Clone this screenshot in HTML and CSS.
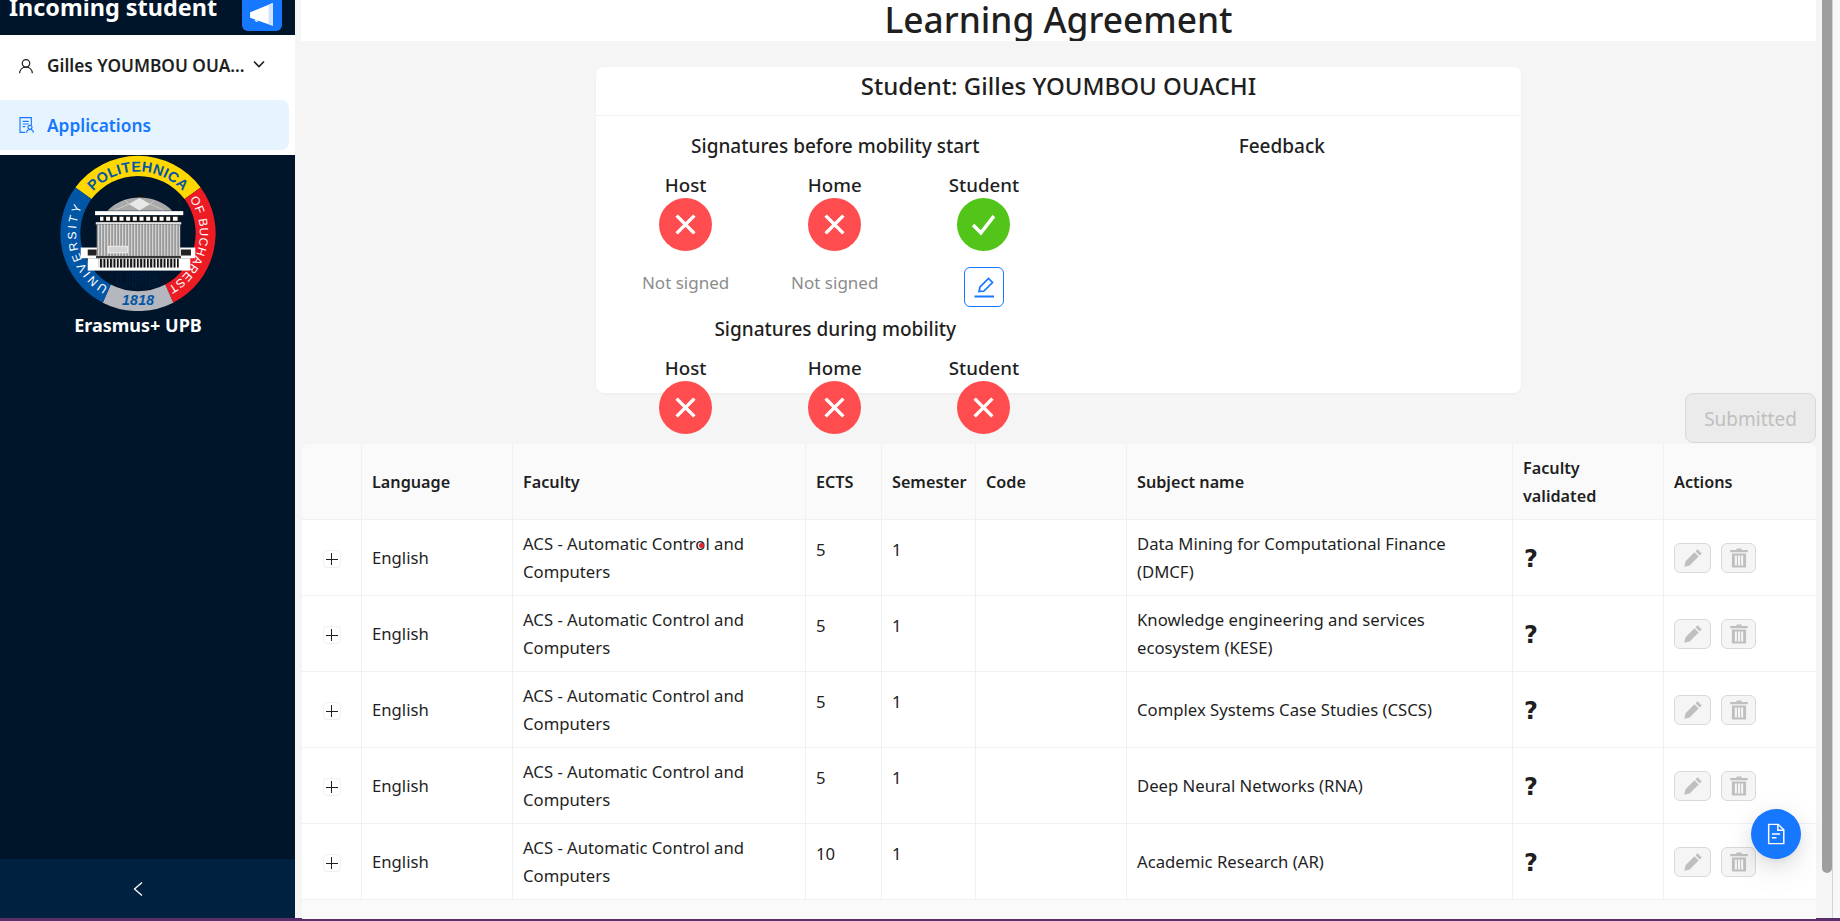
FILE: index.html
```html
<!DOCTYPE html>
<html lang="en">
  <head>
    <meta charset="UTF-8" />
    <meta name="viewport" content="width=device-width, initial-scale=1.0" />
    <title>Learning Agreement</title>
    <link rel="stylesheet" href="styles.css">
  </head>
  <body>
    <div class="layout">
      <aside class="sider">
        <div class="sider-head">
          <span class="sider-title">Incoming student</span>
          <button class="notify-btn">
            <svg viewBox="0 0 24 24" width="26" height="26"><path fill="#fff" d="M1 9.500 22 1v21L12 18.500v0L1 14.500z"/><path fill="#cfe3ff" d="M18 2.600 22 1v21l-4-1.600z"/><path fill="#cfe3ff" d="M5 16l4 1.400a2.200 2.200 0 0 1-4-1.400z"/></svg>
          </button>
        </div>
        <div class="sider-menu">
          <div class="menu-user">
            <svg class="menu-icon" viewBox="0 0 24 24" fill="none" stroke="#1f1f1f" stroke-width="1.800"><circle cx="12" cy="8" r="5.600"/><path d="M2.500 23c0-5.500 4-9.400 9.500-9.400s9.500 3.900 9.500 9.400"/></svg>
            <span class="user-name">Gilles YOUMBOU OUA...</span>
            <svg class="user-caret" viewBox="0 0 12 8" fill="none" stroke="#1f1f1f" stroke-width="1.600"><path d="M1 1.500 6 6.500l5-5"/></svg>
          </div>
          <div class="menu-active">
            <svg class="menu-icon" viewBox="0 0 24 24" fill="none" stroke="#1677ff" stroke-width="1.700"><path d="M11 23H3V1h17v11"/><path d="M7 6.500h9M7 10.500h9M7 14.500h4"/><circle cx="18" cy="15.500" r="3"/><path d="M13 23.500c0-3 2.200-4.800 5-4.800s5 1.800 5 4.800"/></svg>
            <span>Applications</span>
          </div>
        </div>
        <div class="sider-body">
          <svg class="logo" viewBox="30 15 467 467">
            <defs>
              <path id="arc-top" d="M105 157A182 182 0 0 1 422 157"/>
              <path id="arc-left" d="M200 422A185 185 0 0 1 113.500 139"/>
              <path id="arc-right" d="M405.500 129A185 185 0 0 1 332.500 419.500"/>
              <pattern id="cols" width="9" height="10" patternUnits="userSpaceOnUse">
                <rect width="9" height="10" fill="#9a9a9a"/>
                <rect width="3" height="10" fill="#d8d8d8"/>
              </pattern>
              <pattern id="base-cols" width="10" height="10" patternUnits="userSpaceOnUse">
                <rect width="10" height="10" fill="#fff"/>
                <rect width="6" height="10" fill="#111"/>
              </pattern>
            </defs>
            <path fill="#ffd800" d="M76 112A233 233 0 0 1 451 112L403 147A175 175 0 0 0 124 147z"/>
            <path fill="#ed1c24" d="M451 112A233 233 0 0 1 369 457L345 403A175 175 0 0 0 403 147z"/>
            <path fill="#b4b7bd" d="M369 457A233 233 0 0 1 158 457L182 403A175 175 0 0 0 345 403z"/>
            <path fill="#0256a6" d="M158 457A233 233 0 0 1 76 112L124 147A175 175 0 0 0 182 403z"/>
            <text class="logo-top"><textPath href="#arc-top" startOffset="50%" text-anchor="middle">POLITEHNICA</textPath></text>
            <text class="logo-ring logo-univ"><textPath href="#arc-left" startOffset="50%" text-anchor="middle">UNIVERSITY</textPath></text>
            <text class="logo-ring"><textPath href="#arc-right" startOffset="50%" text-anchor="middle">OF BUCHAREST</textPath></text>
            <text class="logo-year" x="264" y="465" text-anchor="middle">1818</text>
            <text class="logo-upb" x="264" y="410" text-anchor="middle">UPB</text>
            <circle cx="268" cy="140" r="9" fill="#111"/>
            <path fill="#a9a9a9" d="M172 182C195 155 235 142 268 142s75 13 98 40z"/>
            <path fill="#e8e8e8" d="M268 144l32 18-32 19-32-19z"/>
            <path fill="none" stroke="#eee" stroke-width="1.500" d="M195 180l41-18M340 180l-40-18M225 150l11 12M312 150l-12 12"/>
            <rect x="92" y="292" width="343" height="32" fill="#fff"/>
            <path fill="#222" d="M113 298h27v18h-27zM392 298h30v18h-30z"/>
            <rect x="113" y="324" width="307" height="37" fill="#fff"/>
            <rect x="135" y="183" width="264" height="12" fill="#fff"/>
            <rect x="148" y="197" width="240" height="19" fill="#111"/>
            <path fill="#fff" d="M150 200h10v12h-10zM168 200h12v12h-12zM188 200h12v12h-12zM208 200h12v12h-12zM228 200h12v12h-12zM248 200h12v12h-12zM268 200h12v12h-12zM288 200h12v12h-12zM308 200h12v12h-12zM328 200h12v12h-12zM348 200h12v12h-12zM368 200h14v12h-14z"/>
            <rect x="137" y="216" width="256" height="7" fill="#e4e4e4"/>
            <rect x="140" y="223" width="250" height="94" fill="url(#cols)"/>
            <rect x="175" y="288" width="57" height="20" fill="#d4d4d4" stroke="#fff" stroke-width="2"/>
            <rect x="138" y="317" width="254" height="7" fill="#333"/>
            <rect x="146" y="326" width="240" height="26" fill="url(#base-cols)"/>
          </svg>
          <div class="brand">Erasmus+ UPB</div>
        </div>
        <div class="sider-trigger">
          <svg viewBox="0 0 10 16" width="10" height="16" fill="none" stroke="#fff" stroke-width="1.300"><path d="M9 1.500 1.500 8 9 14.500"/></svg>
        </div>
      </aside>

      <main class="content">
        <h1 class="page-title"><span>Learning Agreement</span></h1>

        <section class="card">
          <div class="card-head">Student: Gilles YOUMBOU OUACHI</div>
          <div class="card-body">
            <div class="sign-col">
              <h4>Signatures before mobility start</h4>
              <div class="sign-grid">
                <div class="sign-label">Host</div>
                <div class="sign-label">Home</div>
                <div class="sign-label">Student</div>
                <div class="dot dot-no"><svg viewBox="0 0 24 24"><path d="M3.500 3.500l17 17M20.500 3.500l-17 17"/></svg></div>
                <div class="dot dot-no"><svg viewBox="0 0 24 24"><path d="M3.500 3.500l17 17M20.500 3.500l-17 17"/></svg></div>
                <div class="dot dot-yes"><svg viewBox="0 0 24 24"><path d="M2 12.500 9.500 20 22 4"/></svg></div>
                <div class="sign-note">Not signed</div>
                <div class="sign-note">Not signed</div>
                <div class="sign-note">
                  <button class="edit-btn">
                    <svg viewBox="0 0 24 24" fill="none" stroke="#1677ff" stroke-width="1.700"><path d="M7 16.500 8 12 16.500 3.500l4 4L12 16z"/><path d="M2.500 21.500h19.500" stroke-width="2"/></svg>
                  </button>
                </div>
              </div>
              <h4 class="during">Signatures during mobility</h4>
              <div class="sign-grid">
                <div class="sign-label">Host</div>
                <div class="sign-label">Home</div>
                <div class="sign-label">Student</div>
                <div class="dot dot-no"><svg viewBox="0 0 24 24"><path d="M3.500 3.500l17 17M20.500 3.500l-17 17"/></svg></div>
                <div class="dot dot-no"><svg viewBox="0 0 24 24"><path d="M3.500 3.500l17 17M20.500 3.500l-17 17"/></svg></div>
                <div class="dot dot-no"><svg viewBox="0 0 24 24"><path d="M3.500 3.500l17 17M20.500 3.500l-17 17"/></svg></div>
              </div>
            </div>
            <div class="sign-col">
              <h4>Feedback</h4>
            </div>
          </div>
        </section>

        <div class="submit-row">
          <button class="submit-btn">Submitted</button>
        </div>

        <table class="subjects">
          <colgroup>
            <col class="c-expand"><col class="c-lang"><col class="c-faculty"><col class="c-ects"><col class="c-sem"><col class="c-code"><col class="c-name"><col class="c-valid"><col class="c-actions">
          </colgroup>
          <thead>
            <tr>
              <th></th><th>Language</th><th>Faculty</th><th>ECTS</th><th>Semester</th><th>Code</th><th>Subject name</th><th>Faculty validated</th><th>Actions</th>
            </tr>
          </thead>
          <tbody id="rows"></tbody>
        </table>
        <div class="table-end"></div>

        <span class="cursor-dot"></span>
        <button class="fab">
          <svg viewBox="0 0 24 24" width="22" height="22" fill="none" stroke="#fff" stroke-width="1.600"><path d="M4 1.500h10.500L20.500 7.500v15H4z"/><path d="M14 1.500V8h6.500M7.500 12h9M7.500 16h5"/></svg>
        </button>
      </main>
      <div class="scrollbar"><div class="scroll-thumb"></div></div>
    </div>
    <div class="taskbar"></div>
    <script>
      var data = [
        ["5", "Data Mining for Computational Finance (DMCF)"],
        ["5", "Knowledge engineering and services ecosystem (KESE)"],
        ["5", "Complex Systems Case Studies (CSCS)"],
        ["5", "Deep Neural Networks (RNA)"],
        ["10", "Academic Research (AR)"]
      ];
      var pencil = '<svg viewBox="0 0 24 24" width="20" height="20"><path fill="#bfbfbf" d="M17.500 1.500 22.500 6.500 20 9 15 4zM13.800 5.200l5 5L8 21l-6.500 1.500L3 16z"/></svg>';
      var trash = '<svg viewBox="0 0 24 24" width="20" height="20"><path fill="#bfbfbf" d="M9 0.500h6V2.500h7.500v2.500h-21V2.500H9zM3.500 6.500h17V23.500h-17zM7 9v12h2.500V9zM10.800 9v12h2.500V9zM14.500 9v12H17V9z" fill-rule="evenodd"/></svg>';
      var html = "";
      data.forEach(function (row) {
        html += "<tr>" +
          '<td class="center"><span class="expand"></span></td>' +
          "<td>English</td>" +
          "<td>ACS - Automatic Control and Computers</td>" +
          '<td class="top">' + row[0] + "</td>" +
          '<td class="top">1</td>' +
          "<td></td>" +
          "<td>" + row[1] + "</td>" +
          '<td><span class="unknown">?</span></td>' +
          '<td><div class="actions"><button class="act act-edit">' + pencil + '</button><button class="act act-del">' + trash + "</button></div></td>" +
          "</tr>";
      });
      document.getElementById("rows").innerHTML = html;
    </script>
  </body>
</html>
```

FILE: styles.css
```css
* {
  margin: 0;
  padding: 0;
  box-sizing: border-box;
}
html,
body {
  height: 921px;
  overflow: hidden;
  background: #fff;
  font-family: "Noto Sans", "Open Sans", sans-serif;
  color: #1f1f1f;
  font-size: 17px;
}
button {
  font-family: inherit;
  cursor: pointer;
}
.layout {
  display: flex;
  height: 918px;
}
.taskbar {
  height: 3px;
  background: #5a2d6b;
}

/* sider */
.sider {
  width: 295px;
  flex: none;
  display: flex;
  flex-direction: column;
  background: #001529;
}
.sider-head {
  height: 35px;
  display: flex;
  align-items: flex-start;
  padding-left: 9px;
  overflow: hidden;
}
.sider-title {
  color: #fff;
  font-size: 23.400px;
  font-weight: 700;
  line-height: 14px;
  width: 233px;
  white-space: nowrap;
}
.notify-btn {
  width: 40px;
  height: 31px;
  border: 0;
  border-radius: 0 0 6px 6px;
  background: #1677ff;
  display: flex;
  align-items: flex-end;
  justify-content: center;
  padding-bottom: 3px;
}
.sider-menu {
  height: 120px;
  background: #fff;
  padding-top: 8px;
  padding-right: 6px;
}
.menu-user,
.menu-active {
  height: 50px;
  display: flex;
  align-items: center;
  padding-left: 18px;
  font-weight: 600;
  font-size: 17.300px;
}
.menu-user {
  margin-bottom: 7px;
  padding-bottom: 5px;
}
.menu-active {
  background: #e6f4ff;
  color: #1677ff;
  border-radius: 0 8px 8px 0;
}
.menu-icon {
  width: 16px;
  height: 16px;
  margin-right: 13px;
  flex: none;
}
.user-name {
  white-space: nowrap;
  width: 206px;
}
.user-caret {
  width: 12px;
  height: 8px;
  margin-top: -4px;
}
.sider-body {
  flex: 1;
  text-align: center;
}
.logo {
  display: block;
  width: 156px;
  height: 156px;
  margin: 0 0 0 60px;
}
.logo-top {
  font: bold 43px "Liberation Sans", sans-serif;
  fill: #0256a6;
  letter-spacing: 1px;
}
.logo-ring {
  font: 36px "Liberation Sans", sans-serif;
  fill: #fff;
  letter-spacing: 2px;
}
.logo-univ {
  letter-spacing: 7px;
}
.logo-year {
  font: italic bold 42px "Liberation Sans", sans-serif;
  fill: #0256a6;
  letter-spacing: 1px;
}
.logo-upb {
  font: bold 62px "Liberation Sans", sans-serif;
  fill: none;
  stroke: #03224d;
  stroke-width: 2;
}
.brand {
  width: 276px;
  color: #fff;
  font-weight: 700;
  font-size: 18px;
  line-height: 24px;
  margin-top: 2px;
}
.sider-trigger {
  height: 59px;
  background: #002140;
  display: flex;
  align-items: center;
  justify-content: center;
  padding-right: 19px;
}

/* content */
.content {
  position: relative;
  flex: 1;
  background: #f5f5f5;
  padding: 0 6px 0 7px;
  min-width: 0;
}
.page-title {
  height: 41px;
  background: #fff;
  margin-left: -1px;
  overflow: hidden;
  text-align: center;
  font-size: 35.300px;
  font-weight: 500;
  line-height: 40px;
}
.page-title span {
  display: block;
  margin-top: -1px;
}
.card {
  width: 925px;
  height: 326px;
  margin: 26px 0 0 294px;
  background: #fff;
  border-radius: 8px;
  box-shadow: 0 1px 2px rgba(0, 0, 0, 0.03), 0 1px 6px -1px rgba(0, 0, 0, 0.02);
}
.card-head {
  height: 49px;
  border-bottom: 1px solid #f0f0f0;
  text-align: center;
  font-size: 24px;
  font-weight: 500;
  line-height: 38px;
}
.card-body {
  display: grid;
  grid-template-columns: 1fr 1fr;
  padding: 0 16px;
}
.sign-col h4 {
  text-align: center;
  font-size: 19px;
  font-weight: 500;
  line-height: 28px;
  padding-top: 16px;
}
.sign-col h4.during {
  padding-top: 0;
  margin-top: 7px;
}
.sign-grid {
  display: grid;
  grid-template-columns: repeat(3, 1fr);
  justify-items: center;
  margin: 11px 0 0 -1px;
}
.during + .sign-grid {
  margin-top: 11px;
}
.sign-label {
  font-size: 18.700px;
  font-weight: 500;
  line-height: 28px;
  height: 27px;
}
.dot {
  width: 53px;
  height: 53px;
  border-radius: 50%;
  display: flex;
  align-items: center;
  justify-content: center;
}
.dot svg {
  width: 25px;
  height: 25px;
  fill: none;
  stroke: #fff;
  stroke-width: 3.300;
}
.dot-no {
  background: #ff4d4f;
}
.dot-yes {
  background: #52c41a;
}
.sign-note {
  color: #8c8c8c;
  font-size: 17px;
  line-height: 26px;
  padding-top: 19px;
  height: 57px;
}
.edit-btn {
  width: 40px;
  height: 40px;
  margin-top: -3px;
  background: #fff;
  border: 1px solid #1677ff;
  border-radius: 6px;
  display: flex;
  align-items: center;
  justify-content: center;
}
.edit-btn svg {
  width: 24px;
  height: 24px;
}
.submit-row {
  display: flex;
  justify-content: flex-end;
}
.submit-btn {
  width: 131px;
  height: 50px;
  background: #ebebeb;
  border: 1px solid #d9d9d9;
  border-radius: 8px;
  color: #bfbfbf;
  font-size: 19px;
  padding-top: 2px;
}

/* table */
.subjects {
  width: 1514px;
  margin-top: 1px;
  border-collapse: separate;
  border-spacing: 0;
  table-layout: fixed;
  background: #fff;
  border-radius: 8px 8px 0 0;
  overflow: hidden;
}
.c-expand { width: 60px; }
.c-lang { width: 151px; }
.c-faculty { width: 293px; }
.c-ects { width: 76px; }
.c-sem { width: 94px; }
.c-code { width: 151px; }
.c-name { width: 386px; }
.c-valid { width: 151px; }
.c-actions { width: 152px; }
.subjects th,
.subjects td {
  border-bottom: 1px solid #f0f0f0;
  border-right: 1px solid #f0f0f0;
  padding: 0 10px;
  line-height: 28px;
  text-align: left;
  vertical-align: middle;
}
.subjects th:last-child,
.subjects td:last-child {
  border-right: 0;
}
.subjects th {
  height: 76px;
  background: #fafafa;
  font-weight: 600;
  font-size: 16.200px;
}
.subjects td {
  height: 76px;
  font-size: 16.700px;
}
.subjects td.top {
  vertical-align: top;
  padding-top: 16px;
}
.subjects td.center {
  text-align: center;
}
.table-end {
  width: 1514px;
  height: 19px;
  background: #fafafa;
}
.expand {
  display: inline-block;
  position: relative;
  width: 18px;
  height: 18px;
  border: 1px solid #f0f0f0;
  border-radius: 4px;
  vertical-align: middle;
}
.expand::before,
.expand::after {
  content: "";
  position: absolute;
  background: #1f1f1f;
}
.expand::before {
  left: 2px;
  right: 2px;
  top: 7.500px;
  height: 1px;
}
.expand::after {
  top: 2px;
  bottom: 2px;
  left: 7.500px;
  width: 1px;
}
.unknown {
  display: inline-block;
  margin: 4px 0 0 1px;
  font: bold 24px "DejaVu Sans", sans-serif;
  color: #1f1f1f;
}
.actions {
  display: flex;
  gap: 10px;
}
.act {
  height: 30px;
  background: #f5f5f5;
  border: 1px solid #d9d9d9;
  border-radius: 6px;
  display: flex;
  align-items: center;
  justify-content: center;
}
.act-edit {
  width: 37px;
}
.act-del {
  width: 35px;
}
.cursor-dot {
  position: absolute;
  left: 404px;
  top: 543px;
  width: 5px;
  height: 5px;
  border-radius: 50%;
  background: #e8262a;
}
.fab {
  position: absolute;
  left: 1456px;
  top: 809px;
  width: 50px;
  height: 50px;
  border: 0;
  border-radius: 50%;
  background: #1677ff;
  box-shadow: 0 6px 16px rgba(0, 0, 0, 0.08), 0 3px 6px -4px rgba(0, 0, 0, 0.12), 0 9px 28px 8px rgba(0, 0, 0, 0.05);
  display: flex;
  align-items: center;
  justify-content: center;
}

/* scrollbar */
.scrollbar {
  width: 18px;
  flex: none;
  background: #f8f8f8;
}
.scroll-thumb {
  width: 11px;
  height: 100%;
  background: #f5f5f5;
  border-right: 1px solid #d4d4d4;
  position: relative;
}
.scroll-thumb::before {
  content: "";
  position: absolute;
  left: 0;
  top: 0;
  width: 10px;
  height: 873px;
  background: #9e9e9e;
  border-radius: 0 0 5px 5px;
}
```
